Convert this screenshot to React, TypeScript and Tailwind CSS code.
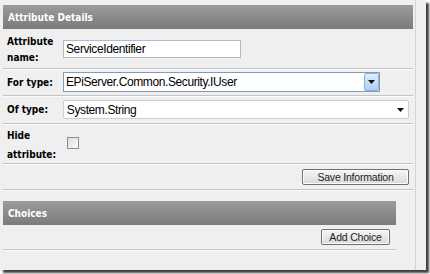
import React from "react";

const label =
  "font-['DejaVu_Sans_Condensed','DejaVu_Sans',sans-serif] font-bold text-[10px] text-black";
const field =
  "font-['Liberation_Sans',Arial,sans-serif] text-[12px] tracking-[-0.4px] text-black";
const btn =
  "h-[16px] px-[7px] rounded-[2px] border border-[#707070] bg-gradient-to-b from-[#f6f6f6] to-[#dadada] font-['Liberation_Sans',Arial,sans-serif] text-[10.5px] tracking-[-0.2px] leading-[14px] text-[#1e1e1e] shadow-[inset_0_0_0_1px_#fcfcfc]";
const row = "flex items-center px-[4px] border-b border-[#c4c4c4] shadow-[0_1px_0_#fafafa]";

const Header = ({ title }: { title: string }) => (
  <div className="h-[24px] flex items-center pl-[5px] bg-gradient-to-b from-[#9c9c9c] to-[#7a7a7a] font-['DejaVu_Sans_Condensed','DejaVu_Sans',sans-serif] font-bold text-[10px] text-white">
    {title}
  </div>
);

const Caret = () => (
  <svg width="7" height="4" viewBox="0 0 7 4">
    <path d="M0 0h7L3.5 4z" fill="#111" />
  </svg>
);

export default function App() {
  return (
    <div className="w-[430px] h-[274px] bg-white">
      <div className="w-[426px] h-[270px] bg-[#efefef] shadow-[3px_3px_2px_rgba(0,0,0,0.75)] flex">
        <div className="w-[416px] pl-[3px] pr-[2px] pt-[5px] border-r border-[#d4d4d4]">
          <Header title="Attribute Details" />

          <div className={row + " h-[40px]"}>
            <div className={label + " w-[56px] leading-[16px] mt-[2px]"}>
              Attribute
              <br />
              name:
            </div>
            <input
              className={field + " w-[178px] h-[18px] px-[2px] bg-white border border-[#a9bdd3] outline-none"}
              defaultValue="ServiceIdentifier"
            />
          </div>

          <div className={row + " h-[27px]"}>
            <div className={label + " w-[56px]"}>For type:</div>
            <div className="w-[317px] h-[20px] flex items-stretch bg-white border border-[#7f9db9]">
              <div className={field + " flex-1 flex items-center pl-[2px]"}>
                EPiServer.Common.Security.IUser
              </div>
              <div className="w-[15px] flex items-center justify-center rounded-[2px] border border-[#8fb0da] bg-gradient-to-b from-[#e0eefd] to-[#aecdf2]">
                <Caret />
              </div>
            </div>
          </div>

          <div className={row + " h-[28px]"}>
            <div className={label + " w-[56px]"}>Of type:</div>
            <div className="w-[347px] h-[19px] flex items-center justify-between pl-[3px] pr-[4px] bg-white border border-[#cfcfcf] rounded-[2px]">
              <span className={field}>System.String</span>
              <Caret />
            </div>
          </div>

          <div className={row + " h-[40px]"}>
            <div className={label + " w-[56px] leading-[19px] mt-[2px]"}>
              Hide
              <br />
              attribute:
            </div>
            <div className="ml-[4px] -mt-[1px] w-[12px] h-[12px] border border-[#8e8e8e] bg-gradient-to-br from-[#dcdcdc] to-[#fbfbfb]" />
          </div>

          <div className={row + " h-[26px] justify-end"}>
            <button className={btn + " w-[107px]"}>Save Information</button>
          </div>

          <div className="w-[393px] mt-[11px]">
            <Header title="Choices" />
            <div className={row + " h-[25px] justify-end pr-[6px]"}>
              <button className={btn + " w-[69px]"}>Add Choice</button>
            </div>
          </div>
        </div>
      </div>
    </div>
  );
}
